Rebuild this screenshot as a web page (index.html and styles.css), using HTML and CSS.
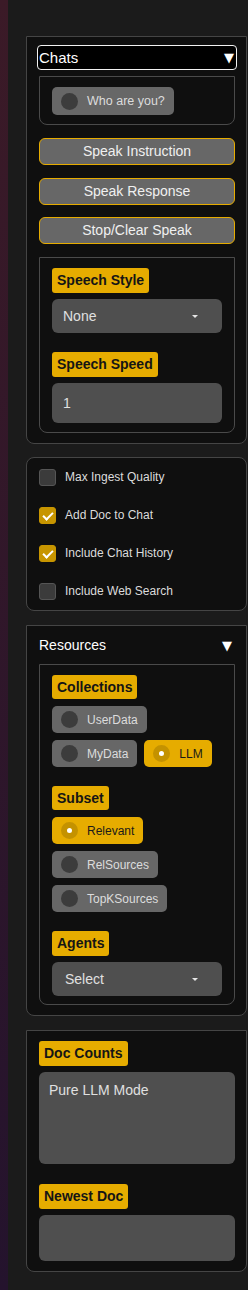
FILE: index.html
```html
<!DOCTYPE html>
<html lang="en">

<head>
    <meta charset="UTF-8">
    <meta name="viewport" content="width=device-width, initial-scale=1.0">
    <title>Chat Sidebar</title>
    <link rel="stylesheet" href="styles.css">
</head>

<body>
    <div class="page">
        <div class="strip"></div>

        <div class="sidebar">

            <!-- chats / speech -->
            <div class="panel panel-chats">
                <div class="chats-head">Chats <span class="tri">&#9660;</span></div>

                <div class="group group-who">
                    <label class="pill"><span class="dot"></span>Who are you?</label>
                </div>

                <button class="speak-btn">Speak Instruction</button>
                <button class="speak-btn">Speak Response</button>
                <button class="speak-btn last">Stop/Clear Speak</button>

                <div class="group">
                    <span class="tag">Speech Style</span>
                    <div class="select">None <span class="caret"></span></div>
                    <span class="tag spaced">Speech Speed</span>
                    <div class="field">1</div>
                </div>
            </div>

            <!-- options -->
            <div class="panel panel-opts">
                <label class="check-row"><span class="box"></span>Max Ingest Quality</label>
                <label class="check-row"><span class="box on"></span>Add Doc to Chat</label>
                <label class="check-row"><span class="box on"></span>Include Chat History</label>
                <label class="check-row"><span class="box"></span>Include Web Search</label>
            </div>

            <!-- resources -->
            <div class="panel panel-res">
                <div class="res-head">Resources <span class="tri">&#9660;</span></div>
                <div class="group group-res">
                    <span class="tag short">Collections</span>
                    <div class="pills">
                        <label class="pill"><span class="dot"></span>UserData</label>
                        <label class="pill"><span class="dot"></span>MyData</label>
                        <label class="pill on"><span class="dot"></span>LLM</label>
                    </div>

                    <span class="tag short spaced">Subset</span>
                    <div class="pills">
                        <label class="pill on"><span class="dot"></span>Relevant</label>
                        <label class="pill"><span class="dot"></span>RelSources</label>
                        <label class="pill"><span class="dot"></span>TopKSources</label>
                    </div>

                    <span class="tag spaced agents">Agents</span>
                    <div class="select select-agents">Select <span class="caret"></span></div>
                </div>
            </div>

            <!-- doc info -->
            <div class="panel panel-docs">
                <span class="tag">Doc Counts</span>
                <div class="area big">Pure LLM Mode</div>
                <span class="tag spaced">Newest Doc</span>
                <div class="area small"></div>
            </div>

        </div>
    </div>
</body>

</html>
```

FILE: styles.css
```css
body {
    margin: 0;
    background-color: #1b1b1b;
    font-family: "Liberation Sans", Arial, sans-serif;
    color: #e6e6e6;
}

.page {
    display: flex;
    min-height: 1290px;
}

.strip {
    width: 8px;
    flex-shrink: 0;
    background: linear-gradient(to bottom, #3b1a27, #24132d);
}

.sidebar {
    width: 221px;
    padding: 36px 0 0 18px;
}

.panel {
    display: flex;
    flex-direction: column;
    background: #0f0f0f;
    border: 1px solid #454545;
    border-radius: 0 0 8px 8px;
    margin-bottom: 13px;
}

/* chats panel */

.panel-chats {
    padding: 8px 9px 10px 10px;
}

.chats-head {
    height: 23px;
    border: 1px solid #f2f2f2;
    border-radius: 4px;
    background: #000;
    color: #fff;
    font-size: 15px;
    line-height: 23px;
    padding-left: 1px;
    display: flex;
    justify-content: space-between;
}

.tri {
    font-family: "DejaVu Sans", sans-serif;
    font-size: 13px;
    color: #fff;
    padding-right: 2px;
}

.group {
    display: flex;
    flex-direction: column;
    align-items: flex-start;
    margin: 6px 2px 0;
    padding: 10px 12px 9px;
    border: 1px solid #4a4a4a;
    border-radius: 0 0 8px 8px;
}

.group-who {
    padding-bottom: 9px;
}

.speak-btn {
    display: block;
    height: 27px;
    margin: 13px 2px 0;
    padding: 0 0 1px;
    background: #676767;
    border: 1px solid #e6ac00;
    border-radius: 6px;
    color: #f0f0f0;
    font-family: "Liberation Sans", Arial, sans-serif;
    font-size: 14px;
}

.speak-btn.last {
    margin-top: 12px;
}

.speak-btn.last + .group {
    margin-top: 13px;
}

.tag {
    display: inline-block;
    height: 25px;
    line-height: 25px;
    padding: 0 5px;
    background: #e6ac00;
    border-radius: 3px;
    color: #151515;
    font-size: 14px;
    font-weight: bold;
}

.tag.short {
    height: 24px;
    line-height: 24px;
}

.tag.spaced {
    margin-top: 19px;
}

.select,
.field {
    align-self: stretch;
    box-sizing: border-box;
    background: #4f4f4f;
    border-radius: 6px;
    color: #e0e0e0;
    font-size: 14px;
    margin-top: 6px;
}

.select {
    height: 34px;
    line-height: 34px;
    padding: 0 24px 0 11px;
    display: flex;
    justify-content: space-between;
    align-items: center;
}

.caret {
    width: 0;
    height: 0;
    border-left: 3px solid transparent;
    border-right: 3px solid transparent;
    border-top: 3px solid #e6e6e6;
}

.field {
    height: 40px;
    line-height: 40px;
    padding-left: 11px;
}

/* radio pills */

.pill {
    display: inline-flex;
    align-items: center;
    height: 27px;
    padding: 0 9px;
    background: #676767;
    border-radius: 5px;
    color: #dcdcdc;
    font-size: 12px;
}

.group-who .pill {
    height: 28px;
    font-size: 12.5px;
}

.dot {
    width: 17px;
    height: 17px;
    border-radius: 50%;
    background: #3c3c3c;
    margin-right: 9px;
    box-sizing: border-box;
}

.pill.on {
    background: #e6ac00;
    color: #1a1a1a;
}

.pill.on .dot {
    background: #fff;
    border: 6px solid #c49200;
}

.pills {
    display: flex;
    flex-wrap: wrap;
    gap: 7px;
    margin-top: 7px;
}

/* options panel */

.panel-opts {
    border-radius: 8px;
    margin-bottom: 14px;
}

.check-row {
    display: flex;
    align-items: center;
    height: 38px;
    padding-left: 12px;
    font-size: 12px;
    color: #dcdcdc;
}

.box {
    width: 17px;
    height: 17px;
    box-sizing: border-box;
    margin-right: 9px;
    background: #3b3b3b;
    border: 1px solid #555;
    border-radius: 3px;
    position: relative;
}

.box.on {
    background: #c79500;
    border-color: #c79500;
}

.box.on::after {
    content: "";
    position: absolute;
    left: 5px;
    top: 2px;
    width: 4px;
    height: 8px;
    border: solid #fff;
    border-width: 0 2px 2px 0;
    transform: rotate(45deg);
}

/* resources panel */

.panel-res {
    padding: 0 11px 10px 12px;
    margin-bottom: 14px;
}

.res-head {
    height: 38px;
    display: flex;
    align-items: center;
    justify-content: space-between;
    font-size: 14px;
    color: #fff;
    padding-right: 1px;
}

.group-res {
    margin: 0;
    padding-bottom: 8px;
}

.group-res .pills:last-of-type {
    flex-direction: column;
    align-items: flex-start;
    gap: 6px;
}

.agents {
    margin-top: 20px;
}

.select-agents {
    padding-left: 13px;
}

/* doc panel */

.panel-docs {
    align-items: flex-start;
    padding: 10px 11px 10px 12px;
}

.area {
    align-self: stretch;
    background: #4f4f4f;
    border-radius: 6px;
    margin-top: 6px;
    font-size: 14px;
    color: #e0e0e0;
    padding: 10px 10px 0;
    box-sizing: border-box;
}

.area.big {
    height: 92px;
}

.area.small {
    height: 46px;
}

.panel-docs .tag.spaced {
    margin-top: 20px;
}
```
